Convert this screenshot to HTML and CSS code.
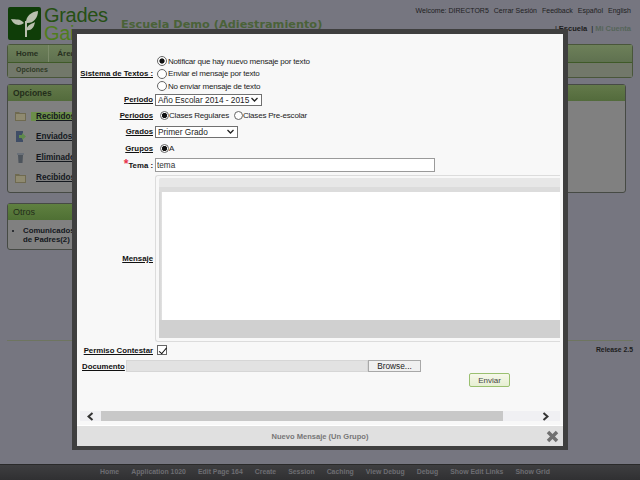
FILE: index.html
```html
<!DOCTYPE html>
<html lang="es">
<head>
<meta charset="utf-8">
<title>Grades</title>
<link rel="stylesheet" href="styles.css">
</head>
<body>
<div class="page">
  <header class="top">
    <div class="logo">
      <svg class="logo-mark" width="33" height="33" viewBox="0 0 33 33"><rect width="33" height="33" rx="2" fill="#0f3d08"/><path d="M18 30V14" stroke="#b9c0ae" stroke-width="2" fill="none"/><path d="M18 16C18 9 23 5 30 4 30 11 25 17 18 16ZM16 16C12 11 8 13 3 12 6 19 12 19 16 16ZM18 23C20 17 24 17 27 15 26 21 23 24 18 23Z" fill="#b9c0ae"/></svg>
      <div class="logo-text"><span>Grades</span><span class="logo-dark">Gain</span></div>
    </div>
    <div class="school">Escuela Demo (Adiestramiento)</div>
    <div class="user">
      <div class="user-links"><span>Welcome: DIRECTOR5</span><span>Cerrar Sesión</span><span>Feedback</span><span>Español</span><span>English</span></div>
      <div class="role-links"><span class="sep">|</span><span class="role-on">Escuela</span><span class="sep">|</span><span class="role-off">Mi Cuenta</span></div>
    </div>
  </header>
  <nav class="nav">
    <div class="nav-tabs"><span class="tab">Home</span><span class="tab">Áreas</span></div>
    <div class="nav-sub">Opciones</div>
  </nav>
  <section class="panel panel-wide">
    <h2 class="panel-head">Opciones</h2>
    <ul class="folders">
      <li class="folder"><svg width="11" height="10" viewBox="0 0 11 10"><path d="M0 1h4l1 1h6v8H0z" fill="#6f6a50"/><path d="M1 3h9v6H1z" fill="#8f8a70"/></svg><a class="on">Recibidos</a></li>
      <li class="folder"><svg width="11" height="11" viewBox="0 0 11 11"><path d="M1 0h7v11H1z" fill="#3f4d66"/><path d="M4 4h3V2l4 3.500-4 3.500V7H4z" fill="#5f8a4c"/></svg><a>Enviados</a></li>
      <li class="folder"><svg width="11" height="11" viewBox="0 0 11 11"><path d="M2 1h7v2H2z" fill="#6a7078"/><path d="M3 3h5l-.5 8h-4z" fill="#4d545c"/></svg><a>Eliminados</a></li>
      <li class="folder"><svg width="11" height="10" viewBox="0 0 11 10"><path d="M0 1h4l1 1h6v8H0z" fill="#6f6a50"/><path d="M1 3h9v6H1z" fill="#8f8a70"/></svg><a>Recibidos</a></li>
    </ul>
  </section>
  <section class="panel panel-small">
    <h2 class="panel-head panel-head-alt">Otros</h2>
    <ul class="others"><li>Comunicados de Padres(2)</li></ul>
  </section>
  <div class="rule"></div>
  <div class="release">Release 2.5</div>
</div>

<footer class="dev-bar">
  <span>Home</span><span>Application 1020</span><span>Edit Page 164</span><span>Create</span><span>Session</span><span>Caching</span><span>View Debug</span><span>Debug</span><span>Show Edit Links</span><span>Show Grid</span>
</footer>

<div class="dialog">
  <div class="dialog-body">
    <div class="row row-sms">
      <label class="lbl">Sistema de Textos :</label>
      <div class="stack">
        <div class="opt"><input class="radio" type="radio" name="sms" checked><span>Notificar que hay nuevo mensaje por texto</span></div>
        <div class="opt"><input class="radio" type="radio" name="sms"><span>Enviar el mensaje por texto</span></div>
        <div class="opt"><input class="radio" type="radio" name="sms"><span>No enviar mensaje de texto</span></div>
      </div>
    </div>
    <div class="row row-period">
      <label class="lbl">Periodo</label>
      <select class="sel sel-year"><option>Año Escolar 2014 - 2015</option></select>
    </div>
    <div class="row row-periods">
      <label class="lbl">Periodos</label>
      <div class="inline">
        <div class="opt"><input class="radio" type="radio" name="per" checked><span>Clases Regulares</span></div>
        <div class="opt"><input class="radio" type="radio" name="per"><span>Clases Pre-escolar</span></div>
      </div>
    </div>
    <div class="row row-grade">
      <label class="lbl">Grados</label>
      <select class="sel sel-grade"><option>Primer Grado</option></select>
    </div>
    <div class="row row-group">
      <label class="lbl">Grupos</label>
      <div class="inline">
        <div class="opt"><input class="radio" type="radio" name="grp" checked><span>A</span></div>
      </div>
    </div>
    <div class="row row-topic">
      <label class="lbl lbl-plain"><span class="star">*</span>Tema :</label>
      <input class="text" type="text" value="tema">
    </div>
    <div class="row row-msg">
      <label class="lbl">Mensaje</label>
      <div class="editor">
        <div class="ed-top"></div>
        <div class="ed-area"></div>
        <div class="ed-bottom"></div>
      </div>
    </div>
    <div class="row row-allow">
      <label class="lbl">Permiso Contestar</label>
      <input class="check" type="checkbox" checked>
    </div>
    <div class="doc">
      <label class="lbl">Documento</label>
      <div class="file-path"></div>
      <div class="file-btn">Browse...</div>
    </div>
    <div class="send-row"><button class="send" type="button">Enviar</button></div>
  </div>
  <div class="hscroll">
    <div class="sb-btn"><svg width="7" height="9" viewBox="0 0 7 9"><path d="M5.500 1 1.500 4.500 5.500 8" fill="none" stroke="#333" stroke-width="2"/></svg></div>
    <div class="sb-thumb"></div>
    <div class="sb-track"><svg width="7" height="9" viewBox="0 0 7 9"><path d="M1.500 1 5.500 4.500 1.500 8" fill="none" stroke="#333" stroke-width="2"/></svg></div>
  </div>
  <div class="dialog-foot">
    <span class="dialog-title">Nuevo Mensaje (Un Grupo)</span>
    <svg class="close" width="13" height="13" viewBox="0 0 13 13"><path d="M2 2 11 11M11 2 2 11" stroke="#707070" stroke-width="3.500"/></svg>
  </div>
</div>
</body>
</html>
```

FILE: styles.css
```css
* { box-sizing: border-box; }
html, body { margin: 0; height: 100%; }
body { position: relative; width: 640px; height: 480px; overflow: hidden; background: #767680; font-family: "Liberation Sans", Arial, sans-serif; font-size: 8px; color: #111; }
.page { padding: 0 7px; height: 464px; }
.top { display: flex; height: 44px; }
.logo { display: flex; flex: none; padding: 7px 0 0 1px; width: 114px; }
.logo-text { display: flex; flex-direction: column; height: 36px; margin: -1px 0 0 3px; font-size: 20px; line-height: 18px; letter-spacing: -.3px; color: #265014; }
.logo-dark { color: #4f7d1c; }
.school { margin-top: 17px; font: bold 11.300px/15px "DejaVu Sans", sans-serif; color: #4a6238; }
.user { margin-left: auto; padding-top: 6px; text-align: right; }
.user-links { display: flex; justify-content: flex-end; gap: 5px; padding-right: 2px; font-size: 7px; line-height: 10px; color: #1e1e22; }
.role-links { display: flex; justify-content: flex-end; gap: 2px; margin-top: 8px; padding-right: 2px; font-size: 7.500px; font-weight: bold; line-height: 10px; }
.sep { font-weight: normal; }
.role-on { color: #1c1c1c; margin-right: 2px; }
.role-off { color: #55655a; }
.nav { height: 34px; border: 1px solid #49563a; border-radius: 3px; }
.nav-tabs { display: flex; height: 18px; background: linear-gradient(#6d8059, #5f7150); border-bottom: 1px solid #3f5a28; font-size: 8px; font-weight: bold; line-height: 17px; color: #27301f; }
.tab { padding: 0 10px 0 8px; border-right: 1px solid #7c8b6a; }
.nav-sub { height: 14px; padding-left: 8px; background: #72786a; font-size: 7px; font-weight: bold; line-height: 13px; color: #2f3a26; }
.panel { margin-top: 6px; border: 1px solid #464a44; border-radius: 3px; background: #808080; }
.panel-wide { width: 619px; height: 109px; }
.panel-small { width: 200px; height: 47px; margin-top: 10px; }
.panel-head { height: 16px; margin: 0; padding-left: 5px; background: linear-gradient(#63794a, #536b3c); font-size: 8.500px; font-weight: bold; line-height: 16px; color: #232d1a; }
.panel-head-alt { font-size: 9px; font-weight: normal; background: linear-gradient(#5f8040, #4f7034); }
.folders { margin: 0; padding: 9px 0 0 7px; list-style: none; }
.folder { display: flex; align-items: center; gap: 5px; height: 12px; margin-bottom: 8.500px; font-size: 8.200px; font-weight: bold; color: #14181e; }
.folder svg { flex: none; }
.folder a { text-decoration: underline; padding-left: 5px; }
.folder a.on { background: #6c8f4a; line-height: 9px; }
.others { margin: 0; padding: 6px 0 0 15px; font-size: 7.800px; font-weight: bold; line-height: 9px; color: #14181e; }
.others li { width: 60px; }
.rule { height: 1px; margin-top: 90px; background: #6e7560; }
.release { margin-top: 5px; text-align: right; font-size: 6.800px; font-weight: bold; color: #1c1c1c; }
.dev-bar { position: absolute; left: 0; right: 0; top: 464px; height: 16px; display: flex; gap: 12px; padding-left: 100px; background: linear-gradient(#3e3e40, #303032); border-top: 1px solid #2a2a2a; font-size: 6.900px; font-weight: bold; line-height: 14px; color: #6d6d72; }
.dialog { position: absolute; left: 72px; top: 29px; width: 496px; height: 421px; display: flex; flex-direction: column; border: solid #3f3f3f; border-width: 5px 5px 4px; background: #f8f8f8; }
.dialog-body { height: 377px; padding-left: 3px; overflow: hidden; }
.row { display: grid; grid-template-columns: 75px 1fr; align-items: center; }
.lbl { padding-right: 2px; font-size: 7.800px; font-weight: bold; text-align: right; text-decoration: underline; white-space: nowrap; color: #111; }
.lbl-plain { text-decoration: none; }
.star { color: #e8324a; font-size: 12px; line-height: 8px; }
.row-sms { margin-top: 21px; height: 37px; }
.row-period { height: 15px; }
.row-periods { height: 17px; }
.row-grade { height: 15px; }
.row-group { height: 18px; }
.row-topic { height: 16px; }
.row-msg { height: 167px; margin-top: 2px; }
.row-allow { height: 16px; }
.stack { display: flex; flex-direction: column; }
.inline { display: flex; gap: 3px; padding-left: 3px; }
.opt { display: flex; align-items: center; gap: 1px; height: 12.500px; font-size: 8px; letter-spacing: -.2px; color: #222; }
.inline .opt { gap: 0; }
.radio { appearance: none; flex: none; width: 10px; height: 10px; margin: 0 0 0 2px; border: 1px solid #666; border-radius: 50%; background: #fff; }
.inline .radio { width: 9px; height: 9px; }
.radio:checked { background: radial-gradient(circle, #111 0 2.200px, #fff 3px); }
.sel { appearance: none; height: 12px; padding: 0 0 0 2px; border: 1px solid #707070; border-radius: 0; background: #fff url("data:image/svg+xml,%3Csvg xmlns='http://www.w3.org/2000/svg' width='7' height='5'%3E%3Cpath d='M.5 1 3.500 4 6.500 1' fill='none' stroke='%23222' stroke-width='1.300'/%3E%3C/svg%3E") no-repeat right 3px center; font: 8.300px "Liberation Sans", sans-serif; color: #222; }
.sel-year { width: 107px; }
.sel-grade { width: 83px; }
.text { width: 280px; height: 14px; padding: 0 1px; border: 1px solid #9a9a9a; background: #fff; font: 8.200px "Liberation Sans", sans-serif; color: #333; outline: none; }
.editor { align-self: stretch; width: 405px; padding: 2px 0 3px 3px; border: 1px solid #dcdcdc; border-right: 0; border-radius: 3px 0 0 3px; display: flex; flex-direction: column; }
.ed-top { height: 14px; border-radius: 2px 0 0 0; background: linear-gradient(#e7e7e7 0 9px, #dcdcdc 9px); }
.ed-area { flex: 1; padding-left: 3px; background: linear-gradient(90deg, #d2d2d2, #e2e2e2 3px, #fff 3px); }
.ed-bottom { height: 18px; background: #d0d0d0; }
.check { appearance: none; position: relative; width: 10px; height: 10px; margin: 0 0 0 2px; border: 1px solid #666; background: #fff; }
.check:checked::after { content: ""; position: absolute; left: 2.500px; top: -.5px; width: 3px; height: 6.500px; border: solid #111; border-width: 0 1.500px 1.500px 0; transform: rotate(40deg); }
.doc { display: flex; align-items: center; height: 12px; margin-top: 2px; }
.doc .lbl { flex: none; width: 41px; margin: 0 3px 0 2px; padding: 0; text-align: left; }
.file-path { width: 242px; height: 12px; background: #e2e2e2; border: 1px solid #d6d6d6; }
.file-btn { width: 53px; height: 12px; border: 1px solid #a8a8a8; background: #f0f0f0; font-size: 8.300px; line-height: 10px; text-align: center; color: #222; }
.send-row { padding: 1px 0 0 389px; }
.send { display: block; width: 41px; height: 14px; padding: 0; border: 1px solid #9ac070; border-radius: 2px; background: linear-gradient(#f6f8ea, #e6efd2); font: 8px "Liberation Sans", sans-serif; color: #444; }
.hscroll { display: flex; height: 10px; margin: 0 3px; }
.sb-btn { display: flex; align-items: center; justify-content: center; width: 21px; background: #f0f0f3; }
.sb-thumb { width: 402px; background: #c8c8c8; }
.sb-track { flex: 1; display: flex; align-items: center; justify-content: flex-end; padding-right: 11px; background: #f0f0f3; }
.dialog-foot { position: relative; flex: 1; display: flex; align-items: center; justify-content: center; margin-top: 4px; background: #e0e0e0; border-top: 1px solid #fff; }
.dialog-title { font-size: 7.550px; font-weight: bold; color: #777; }
.close { position: absolute; right: 4px; top: 4px; }
```
